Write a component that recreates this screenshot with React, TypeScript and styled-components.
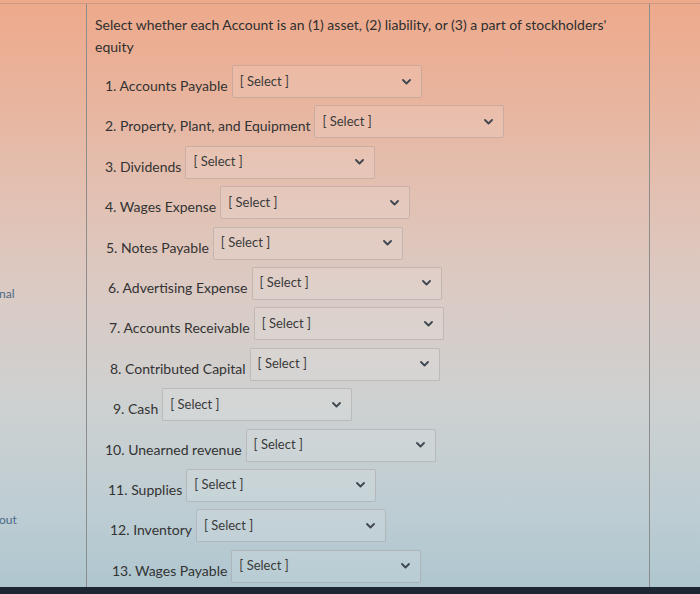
import React from "react";
import styled, { createGlobalStyle } from "styled-components";

const GlobalStyle = createGlobalStyle`
  html, body {
    margin: 0;
    padding: 0;
  }
  body {
    font-family: Lato, "Open Sans", "Liberation Sans", sans-serif;
    background: linear-gradient(
      180deg,
      #eea98b 0%,
      #e9b39c 15%,
      #e2c1b3 33%,
      #dacbc5 50%,
      #cdd1d1 68%,
      #bdcdd3 86%,
      #afc6cf 98%
    );
    color: #333;
    overflow: hidden;
  }
`;

const Page = styled.div`
  display: flex;
  height: 584px;
  border-top: 1px solid rgba(120, 110, 110, 0.3);
  margin-top: 3px;
  box-sizing: border-box;
`;

const Sidebar = styled.nav`
  width: 86px;
  flex-shrink: 0;
  border-right: 1px solid #8c8c8c;
  display: flex;
  flex-direction: column;
  overflow: hidden;
`;

const SideLink = styled.span<{ $gap: number }>`
  margin-top: ${(p) => p.$gap}px;
  margin-left: -1px;
  font-size: 12px;
  color: #4d6a86;
  line-height: 16px;
`;

const Main = styled.main`
  width: 563px;
  flex-shrink: 0;
  border-right: 1px solid #8c8c8c;
  padding: 10px 0 0 8px;
  box-sizing: border-box;
`;

const Question = styled.p`
  margin: 0;
  width: 530px;
  font-size: 14px;
  line-height: 22px;
  color: #2f2f2f;
`;

const List = styled.div`
  display: flex;
  flex-direction: column;
  gap: 7.4px;
  margin-top: 7px;
  padding-left: 10px;
`;

const Row = styled.div<{ $indent: number }>`
  display: flex;
  align-items: center;
  height: 33px;
  padding-left: ${(p) => p.$indent}px;
`;

const Label = styled.span`
  font-size: 14px;
  color: #333;
  margin-right: 4px;
  padding-top: 8px;
  white-space: nowrap;
`;

const SelectBox = styled.div`
  width: 190px;
  height: 33px;
  box-sizing: border-box;
  border: 1px solid rgba(150, 140, 140, 0.38);
  border-radius: 2px;
  background: rgba(255, 255, 255, 0.12);
  display: flex;
  align-items: center;
  justify-content: space-between;
  padding: 0 10px 0 7px;
`;

const Placeholder = styled.span`
  font-size: 13px;
  color: #3a3a3a;
  margin-top: -2px;
`;

const Chevron = () => (
  <svg width="9" height="6" viewBox="0 0 9 6" aria-hidden="true">
    <path
      d="M1 1 L4.5 4.5 L8 1"
      fill="none"
      stroke="#3e4650"
      strokeWidth="1.8"
      strokeLinecap="round"
      strokeLinejoin="round"
    />
  </svg>
);

const BottomBar = styled.div`
  height: 10px;
  background: #1c2733;
`;

const accounts: { name: string; indent: number }[] = [
  { name: "1. Accounts Payable", indent: -4 },
  { name: "2. Property, Plant, and Equipment", indent: -2 },
  { name: "3. Dividends", indent: -1 },
  { name: "4. Wages Expense", indent: 0 },
  { name: "5. Notes Payable", indent: 1 },
  { name: "6. Advertising Expense", indent: 3 },
  { name: "7. Accounts Receivable", indent: 4 },
  { name: "8. Contributed Capital", indent: 5 },
  { name: "9. Cash", indent: 8 },
  { name: "10. Unearned revenue", indent: 0 },
  { name: "11. Supplies", indent: 3 },
  { name: "12. Inventory", indent: 5 },
  { name: "13. Wages Payable", indent: 7 },
];

export default function App() {
  return (
    <>
      <GlobalStyle />
      <Page>
        <Sidebar>
          <SideLink $gap={282}>nal</SideLink>
          <SideLink $gap={210}>out</SideLink>
        </Sidebar>
        <Main>
          <Question>
            Select whether each Account is an (1) asset, (2) liability, or (3) a
            part of stockholders' equity
          </Question>
          <List>
            {accounts.map((a) => (
              <Row key={a.name} $indent={a.indent}>
                <Label>{a.name}</Label>
                <SelectBox>
                  <Placeholder>[ Select ]</Placeholder>
                  <Chevron />
                </SelectBox>
              </Row>
            ))}
          </List>
        </Main>
      </Page>
      <BottomBar />
    </>
  );
}
